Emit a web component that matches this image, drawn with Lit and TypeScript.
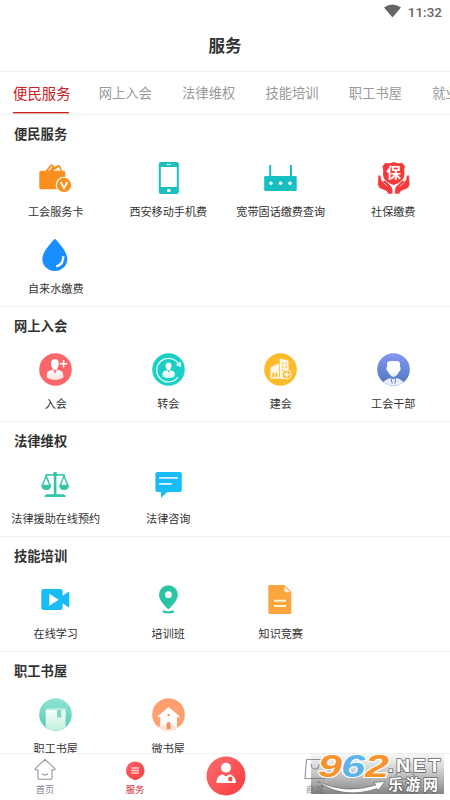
import { LitElement, html, css, svg } from "lit";
import { customElement, property } from "lit/decorators.js";
import { classMap } from "lit/directives/class-map.js";

const person = svg`<path d="M16 6.200c3 0 4 2 3.800 4.800-.2 2.500-1.300 4.500-2.400 5.200l4.600 1.800c1.800.8 2.300 2 2.300 6.500-4.500 3.300-12 3.300-16.500 0 0-4.500.5-5.700 2.300-6.500l4.400-1.800c-1.300-.8-2.300-2.800-2.500-5.200C11.800 8.200 13 6.200 16 6.200z"/>`;

const icons: Record<string, unknown> = {
  wallet: svg`
    <path d="M6 10.500L11.500 3.800q1-1.200 2-.1l2 2 4-1.700q1.200-.4 1.600.7L23.500 10.500z" fill="#f98f1c"/>
    <path d="M9.500 9.700l3.500-4M15.500 9.700l4-3 1.600 3z" stroke="#fff" stroke-width="1.100" fill="#fff"/>
    <path d="M2 9.700H24.500q1.700 0 1.700 1.700V28.300H2Q.3 28.300.3 26.600V11.400Q.3 9.700 2 9.700z" fill="#f98f1c"/>
    <circle cx="25" cy="24" r="8.300" fill="#fff"/><circle cx="25" cy="24" r="7.200" fill="#f98f1c"/>
    <path d="M21.700 21l3.300 6.200L28.300 21" stroke="#fff" stroke-width="1.700" fill="none"/>`,
  phone: svg`
    <rect x="6.800" y="1" width="20" height="32" rx="2" fill="#1abfbf"/>
    <rect x="8.800" y="6" width="16" height="20" fill="#fff"/>
    <path d="M14.700 3.600h4.200" stroke="#fff" stroke-width="1"/><circle cx="16.800" cy="29.500" r="1.800" fill="#fff"/>`,
  router: svg`
    <path d="M6.200 4v12M27 4v12" stroke="#16c0c1" stroke-width="2"/>
    <rect x=".2" y="15" width="32.500" height="15" rx="1.200" fill="#16c0c1"/>
    <g fill="#fff"><circle cx="7" cy="22.300" r="1.700"/><circle cx="16.600" cy="22.300" r="1.700"/><circle cx="26" cy="22.300" r="1.700"/></g>`,
  insurance: svg`
    <path d="M8.500 1.700Q12.500 3.200 16.700 1q4.200 2.200 8.200.7L28 5.200q-1.300 2.800-.7 6.800c.7 5.500-3.300 9.800-10.600 12C9.400 21.800 5.400 17.500 6.100 12q.6-4-.7-6.800z" fill="#f5393a"/>
    <text x="16.700" y="17" text-anchor="middle" font-size="14.500" font-weight="700" fill="#fff">保</text>
    <g fill="#f5393a" stroke="#fff" stroke-width=".5">
    <path d="M1.200 14.300q2.300-1 2.700 1.300l.8 4q.6 1.200 1.800.4 1.200-.9 2.300.1l5.200 5q1.600 1.500 1.600 3.600V33h-4.800q-.2-2.400-1.700-3L3.400 27.600Q.8 26.500.7 23.500z"/>
    <path d="M32.200 14.300q-2.300-1-2.700 1.300l-.8 4q-.6 1.200-1.800.4-1.200-.9-2.300.1l-5.200 5q-1.600 1.500-1.600 3.600V33h4.800q.2-2.400 1.700-3l5.700-2.400q2.600-1.100 2.700-4.100z"/></g>
    <path d="M6.500 21.500l4 4M26.900 21.500l-4 4" stroke="#fff" stroke-width=".7"/>`,
  drop: svg`
    <path d="M15.200 1.300q.7-.7 1.400 0C21.500 6.800 28.300 14.500 28.300 21A12.400 12 0 0 1 3.300 21C3.300 14.500 10.500 6.800 15.200 1.300z" fill="#178fff"/>
    <path d="M24.300 18.300q.2 8.200-7 10.200" stroke="#fff" stroke-width="2.300" fill="none"/>`,
  join: svg`
    <circle cx="16.500" cy="16.500" r="16.300" fill="#fb666b"/><g fill="url(#fade)">${person}</g>
    <path d="M14 16.800l2 4.200 2-4.200" fill="#fb7a7c"/>
    <path d="M20.800 10.800h7.600M24.600 7v7.600" stroke="#fff" stroke-width="1.500"/>`,
  transfer: svg`
    <circle cx="16.500" cy="16.500" r="16.300" fill="#1bcfc4"/>
    <g fill="url(#fade)" transform="translate(4.600 4.800) scale(.75)">${person}</g>
    <path d="M15.200 17.200l1.300 2.800 1.300-2.800" fill="#1bcfc4"/>
    <path d="M27 11.700A11.800 11.800 0 1 0 26 24.200" stroke="#dffaf8" stroke-width="1.300" fill="none"/>
    <path d="M23.500 12.300l5.700 1.600-.2-5.700z" fill="#d5f7f5"/>`,
  building: svg`
    <circle cx="16.500" cy="16.500" r="16.300" fill="#fcbb2b"/>
    <path d="M6.500 14.300l8.500-4V24.500H6.500zM15.800 5.300l8.700 2.500V24.500h-8.700z" fill="#fff8ea"/>
    <path d="M6 25h15" stroke="#fff" stroke-width="1.200"/>
    <path d="M8.300 19.700h2V24h-2zM11.400 19.700h2V24h-2z" fill="#fcbb2b"/>
    <path d="M18 10.500h1.500M21.300 10.500h1.500M18 14h1.500M21.300 14h1.500M18 17.500h1.500" stroke="#fcbb2b" stroke-width="1.300"/>
    <circle cx="22.700" cy="21.500" r="4.400" fill="#fcbb2b" stroke="#fff0ce" stroke-width="1.100"/>
    <path d="M20 21.500h5.400M22.700 18.800v5.400" stroke="#fff" stroke-width="1.300"/>`,
  cadre: svg`
    <circle cx="16.500" cy="16.500" r="16.300" fill="url(#indigo)"/>
    <path d="M10.200 14q-1.200-6 3-6h7.200q3.500 0 2.500 6 1.300.2.500 3-.4 1.200-1.200 1.200-1.600 4.500-5.700 6-4.100-1.500-5.700-6-.8 0-1.200-1.200-.7-2.800.6-3z" fill="url(#fade)"/>
    <path d="M6.500 29.400Q8 26.600 13.700 25l2.800 1.200L19.300 25q5.700 1.600 7.200 4.400-10 6.700-20 0z" fill="#e8eef9"/>
    <path d="M14 25.200l1.200 5.300M19 25.200l-1.200 5.300" stroke="#5f7dcc" stroke-width="1" fill="none"/>`,
  scales: svg`
    <g stroke="#34c3a5" fill="none"><path d="M16.100 5v22.500" stroke-width="2.600"/>
    <path d="M6.500 6.900h19.200" stroke-width="1.600"/><path d="M3.400 17.500L7.200 8l3.800 9.500M21.200 17.500L25 8l3.800 9.500" stroke-width="1.500"/></g>
    <g fill="#34c3a5"><circle cx="16.100" cy="5.700" r="1.900"/><path d="M2.300 16.700h9.900q0 5.300-4.950 5.300T2.300 16.700zM20.100 16.700H30q0 5.300-4.950 5.300T20.100 16.700z"/>
    <path d="M7.500 26.300h17.200q2 .4 2 2.700H5.500q0-2.300 2-2.700z"/></g>`,
  chat: svg`
    <path d="M5.400 4h22.400q2 0 2 2v16q0 2-2 2H15.500L9 29.700V24H5.400q-2 0-2-2V6q0-2 2-2z" fill="#18bdf7"/>
    <path d="M7 9.900h18.800M7 15.900h12.800" stroke="#e0f7ff" stroke-width="1.800"/>`,
  video: svg`
    <rect x="2.300" y="6" width="21.300" height="21" rx="2.500" fill="#18bdf7"/>
    <path d="M22 12.500h2l5-3.600q1.300-.7 1.300.6v14q0 1.300-1.300.6l-5-3.600h-2z" fill="#18bdf7"/><path d="M10.300 10.700v12L19.600 16.700z" fill="#fff"/>`,
  pin: svg`
    <path fill-rule="evenodd" d="M16.400 2.300a9.400 9.400 0 0 1 9.400 9.400c0 5.500-5.500 11-9.400 14.600C12.500 22.700 7 17.200 7 11.700a9.400 9.400 0 0 1 9.400-9.400zm0 6a3.400 3.400 0 1 0 0 6.800 3.400 3.400 0 0 0 0-6.800z" fill="#29c4a4"/>
    <path d="M10.800 28.200q5.600 2.500 11.200 0" stroke="#29c4a4" stroke-width="2.100" fill="none"/>`,
  document: svg`
    <path d="M5.300 2H20.300l7 7V30q0 1-1 1H5.300q-1 0-1-1V3q0-1 1-1z" fill="#fba63d"/>
    <path d="M20.300 3.500v3.800q0 1.900 1.900 1.900h3.900z" fill="#fff2dd"/>
    <path d="M10 17.700h12M10 23h12" stroke="#fff4d6" stroke-width="1.900"/>`,
  book: svg`
    <circle cx="16.500" cy="16.500" r="16.300" fill="url(#mint)"/>
    <path d="M8.300 10.300H26.600V12H7q0-1.700 1.300-1.700z" fill="#b8ecdf"/>
    <path d="M6.700 12H26.600V29.200Q16.500 36 6.700 29.200z" fill="url(#page)"/><path d="M18 12h4.300v8l-2.150-1L18 20z" fill="#7fd8c6"/>`,
  house: svg`
    <circle cx="16.500" cy="16.500" r="16.300" fill="#ff9f70"/>
    <path d="M5.500 18.500L16.600 9l11.200 9.500-1 1-1.800-1V31q-8 3-16.800 0V18.500l-1.800 1z" fill="url(#fade)"/>
    <path d="M5.500 29q5-2.500 11-1 6-1.500 11 1-5 4-11 4t-11-4z" fill="#ffe4d7"/>
    <path d="M14.600 31v-5q0-2 2-2t2 2v5z" fill="#f58f5d"/><rect x="15.500" y="16" width="2.200" height="2" fill="#f58f5d"/>`,
};

const defs = svg`<defs>
  <linearGradient id="fade" x2="0" y2="1"><stop stop-color="#fff"/><stop offset=".6" stop-color="#fff"/><stop offset="1" stop-color="#fff" stop-opacity=".78"/></linearGradient>
  <linearGradient id="indigo" x2="0" y2="1"><stop stop-color="#8396f5"/><stop offset="1" stop-color="#4f77ba"/></linearGradient>
  <linearGradient id="mint" x2="0" y2="1"><stop stop-color="#8fe4d3"/><stop offset="1" stop-color="#52cab5"/></linearGradient>
  <linearGradient id="page" x2="0" y2="1"><stop stop-color="#f4fdfa"/><stop offset="1" stop-color="#c3efdc"/></linearGradient>
</defs>`;

interface Service { icon: string; label: string }

@customElement("service-section")
export class ServiceSection extends LitElement {
  @property() heading = "";
  @property({ attribute: false }) items: Service[] = [];

  static styles = css`
    :host { display: block; box-sizing: border-box; border-bottom: 1px solid #f0f0f0; padding-bottom: 8px; }
    .heading { margin: 0; height: 46px; line-height: 38px; padding-left: 14px; font-size: 13.3px; font-weight: 700; color: #333; }
    .grid { display: grid; grid-template-columns: repeat(4, 1fr); row-gap: 17px; margin-left: -.5px; margin-right: .5px; }
    .item { display: flex; flex-direction: column; align-items: center; }
    .icon { width: 33px; height: 33px; display: block; margin-bottom: 8px; }
    .label { height: 19px; line-height: 19px; font-size: 11.1px; color: #333; white-space: nowrap; }
  `;

  render() {
    return html`<h2 class="heading">${this.heading}</h2>
      <div class="grid">${this.items.map((i) => html`<div class="item">
        <svg class="icon" viewBox="0 0 33 33">${defs}${icons[i.icon]}</svg>
        <span class="label">${i.label}</span></div>`)}</div>`;
  }
}

@customElement("app-root")
export class AppRoot extends LitElement {
  static styles = css`
    :host { display: flex; flex-direction: column; position: relative; height: 800px; overflow: hidden; background: #fff;
      font-family: "Noto Sans CJK SC", "Noto Sans", sans-serif; }
    .status { height: 24px; flex: none; display: flex; justify-content: flex-end; align-items: center; gap: 7px; padding-right: 8px; box-sizing: border-box;
      font: 500 13.500px/24px Roboto, sans-serif; color: #666; }
    .wifi { width: 17px; height: 14px; margin-top: -2px; }
    .title { margin: 0; height: 47px; flex: none; line-height: 42px; text-align: center; font-size: 16.500px; font-weight: 700; color: #333; }
    .tabs { height: 44px; box-sizing: border-box; flex: none; display: flex; border: solid #f0f0f0; border-width: 1px 0; padding-left: 13px; gap: 30.200px; overflow: hidden; }
    .tab { flex: none; box-sizing: border-box; font-size: 13.300px; line-height: 42px; color: #999; white-space: nowrap; height: 42px; }
    .active { width: 56px; margin-right: -.5px; font-size: 14.400px; color: #cb2023; display: flex; flex-direction: column; height: 41px; line-height: 42px; border-bottom: 1px solid #c62327; box-shadow: 0 .5px 0 #d96063; }
    .content { flex: 1; min-height: 0; overflow: hidden; }
    .nav { height: 47px; flex: none; box-sizing: border-box; border-top: 1px solid #f1f1f1; display: grid; grid-template-columns: repeat(5, 1fr); background: #fff; }
    .entry { display: flex; flex-direction: column; align-items: center; padding-top: 4px; font-size: 9.300px; line-height: 14px; color: #888b96; }
    .entry.current { color: #d42a2e; }
    .glyph { width: 22px; height: 22px; margin-bottom: 2px; }
    .main { width: 40px; height: 40px; margin: -2px 0 0 2px; }
    .mark { position: absolute; left: 311px; top: 753px; width: 133px; height: 41px; }
  `;

  private tabs = ["便民服务", "网上入会", "法律维权", "技能培训", "职工书屋", "就业服务"];

  private sections: { heading: string; items: Service[] }[] = [
    { heading: "便民服务", items: [
      { icon: "wallet", label: "工会服务卡" }, { icon: "phone", label: "西安移动手机费" },
      { icon: "router", label: "宽带固话缴费查询" }, { icon: "insurance", label: "社保缴费" },
      { icon: "drop", label: "自来水缴费" }] },
    { heading: "网上入会", items: [
      { icon: "join", label: "入会" }, { icon: "transfer", label: "转会" },
      { icon: "building", label: "建会" }, { icon: "cadre", label: "工会干部" }] },
    { heading: "法律维权", items: [{ icon: "scales", label: "法律援助在线预约" }, { icon: "chat", label: "法律咨询" }] },
    { heading: "技能培训", items: [
      { icon: "video", label: "在线学习" }, { icon: "pin", label: "培训班" }, { icon: "document", label: "知识竞赛" }] },
    { heading: "职工书屋", items: [{ icon: "book", label: "职工书屋" }, { icon: "house", label: "微书屋" }] },
  ];

  render() {
    return html`
      <div class="status">
        <svg class="wifi" viewBox="0 0 17 14"><path d="M0 3.500Q8.500-2.500 17 3.500L8.500 13.500z" fill="#666"/></svg>
        <span>11:32</span>
      </div>
      <h1 class="title">服务</h1>
      <div class="tabs">${this.tabs.map((t, i) => html`<span class=${classMap({ tab: true, active: i === 0 })}>${t}</span>`)}</div>
      <div class="content">${this.sections.map((s) => html`<service-section .heading=${s.heading} .items=${s.items}></service-section>`)}</div>
      <nav class="nav">
        <div class="entry">
          <svg class="glyph" viewBox="0 0 22 22" fill="none" stroke="#9294a3" stroke-width="1.100" stroke-linejoin="round"><path d="M11 1.300L1 10.800q-.2 1 1 1h2V20q0 1.300 1.300 1.300h11.400Q18 21.300 18 20v-8.200h2q1.200 0 1-1z"/><path d="M8 15.800q3 2.300 6 0"/></svg>首页
        </div>
        <div class="entry current">
          <svg class="glyph" viewBox="0 0 22 22"><defs><linearGradient id="r" x2="1" y2="1"><stop stop-color="#fa6468"/><stop offset="1" stop-color="#f93d40"/></linearGradient></defs>
            <path d="M11.300 3.500a9 9 0 0 1 5.700 16l-4.300 2.500q-1.400.8-2.800 0L5.500 19.500a9 9 0 0 1 5.800-16z" fill="url(#r)"/><path d="M7.500 10h7.500M7.500 12.500h7.500M7.500 15h7.500" stroke="#fff" stroke-opacity=".75" stroke-width="1.300"/></svg>服务
        </div>
        <div class="entry">
          <svg class="main" viewBox="0 0 40 40"><defs><linearGradient id="c" x2="1" y2="1"><stop stop-color="#fb6d70"/><stop offset="1" stop-color="#f93c3e"/></linearGradient></defs>
            <circle cx="20" cy="20" r="19.500" fill="url(#c)"/><circle cx="20" cy="11.800" r="5" fill="#fff"/>
            <path d="M10.300 27q0-6.500 5.700-8.800l4 2 4-2q6 2.300 6 8.800z" fill="#fff"/><rect x="22.300" y="20.800" width="4" height="4.400" rx="1.300" fill="#fa4d50"/></svg>
        </div>
        <div class="entry">
          <svg class="glyph" viewBox="0 0 22 22" fill="none" stroke="#9294a3" stroke-width="1.100"><path d="M2.500 1.500h17l1.500 19H1z"/><path d="M7 6q0 5 4 5t4-5"/></svg>商城
        </div>
        <div class="entry">
          <svg class="glyph" viewBox="0 0 22 22" fill="none" stroke="#9294a3" stroke-width="1.100"><circle cx="11" cy="7" r="5"/><path d="M1 21q0-8 10-8t10 8z"/></svg>我的
        </div>
      </nav>
      <svg class="mark" viewBox="0 0 133 41">
        <defs><linearGradient id="bg" x2="0" y2="1"><stop stop-color="#888" stop-opacity=".04"/><stop offset=".5" stop-color="#777" stop-opacity=".42"/><stop offset="1" stop-color="#666" stop-opacity=".8"/></linearGradient></defs>
        <rect width="133" height="41" fill="url(#bg)"/>
        <path d="M6 28Q34 42 65 32l-2-2.500 11-1-7 9-1-2Q32 47 6 28z" fill="#fff" stroke="#666" stroke-width=".6"/>
        <g font-family="Liberation Sans" font-weight="700" font-style="italic" font-size="32" stroke="#fff" stroke-width="2.200" paint-order="stroke" stroke-linejoin="round">
          <text x="7" y="24" textLength="24" lengthAdjust="spacingAndGlyphs" fill="#f7932d">9</text>
          <text x="30" y="24" textLength="24" lengthAdjust="spacingAndGlyphs" fill="#5eb3e8">6</text>
          <text x="54" y="24" textLength="24" lengthAdjust="spacingAndGlyphs" fill="#f7932d">2</text>
        </g>
        <g fill="#fff" stroke="#666" stroke-width="1.500" paint-order="stroke">
          <text x="77" y="19" font-family="Liberation Sans" font-size="19" font-weight="700" letter-spacing="2.500" textLength="55" lengthAdjust="spacingAndGlyphs">.NET</text>
          <text x="77" y="37" font-size="15" font-weight="700" letter-spacing="2.500">乐游网</text>
        </g>
      </svg>`;
  }
}
